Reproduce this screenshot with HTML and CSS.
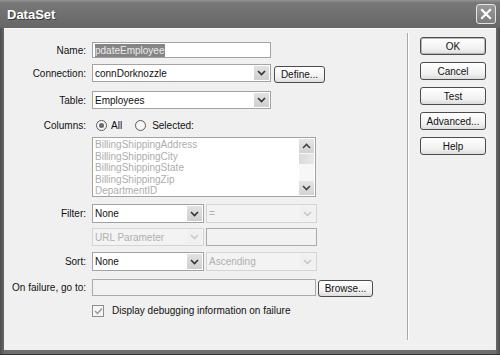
FILE: index.html
```html
<!DOCTYPE html>
<html lang="en">
<head>
    <meta charset="UTF-8">
    <title>DataSet</title>
    <link rel="stylesheet" href="styles.css">
</head>
<body>

    <div class="window">
        <!-- Title bar -->
        <div class="titlebar">
            <span class="title">DataSet</span>
            <span class="close">
                <svg width="12" height="12" viewBox="0 0 12 12"><path d="M2 2 L10 10 M10 2 L2 10" stroke="#fff" stroke-width="2.2" stroke-linecap="square"/></svg>
            </span>
        </div>

        <div class="client">
            <div class="form">

                <div class="row row-name">
                    <label class="lbl">Name:</label>
                    <div class="field w-full"><span class="sel-text">pdateEmployee</span></div>
                </div>

                <div class="row row-conn">
                    <label class="lbl">Connection:</label>
                    <div class="select w-full">
                        <span class="val">connDorknozzle</span>
                        <span class="arrow"><svg width="9" height="6" viewBox="0 0 9 6"><path d="M1 1 L4.5 4.5 L8 1" fill="none" stroke="#333" stroke-width="1.6"/></svg></span>
                    </div>
                    <button class="btn btn-define">Define...</button>
                </div>

                <div class="row row-table">
                    <label class="lbl">Table:</label>
                    <div class="select w-full">
                        <span class="val">Employees</span>
                        <span class="arrow"><svg width="9" height="6" viewBox="0 0 9 6"><path d="M1 1 L4.5 4.5 L8 1" fill="none" stroke="#333" stroke-width="1.6"/></svg></span>
                    </div>
                </div>

                <div class="row row-cols">
                    <label class="lbl">Columns:</label>
                    <span class="radio checked"></span><span class="opt">All</span>
                    <span class="radio"></span><span class="opt">Selected:</span>
                </div>

                <div class="row row-list">
                    <span class="lbl"></span>
                    <div class="listbox">
                        <ul class="items">
                            <li>BillingShippingAddress</li>
                            <li>BillingShippingCity</li>
                            <li>BillingShippingState</li>
                            <li>BillingShippingZip</li>
                            <li>DepartmentID</li>
                        </ul>
                        <div class="scrollbar">
                            <span class="sb-btn"><svg width="9" height="6" viewBox="0 0 9 6"><path d="M1 5 L4.5 1.5 L8 5" fill="none" stroke="#444" stroke-width="1.6"/></svg></span>
                            <span class="sb-thumb"></span>
                            <span class="sb-track"></span>
                            <span class="sb-btn"><svg width="9" height="6" viewBox="0 0 9 6"><path d="M1 1 L4.5 4.5 L8 1" fill="none" stroke="#444" stroke-width="1.6"/></svg></span>
                        </div>
                    </div>
                </div>

                <div class="row row-filter">
                    <label class="lbl">Filter:</label>
                    <div class="select w-half">
                        <span class="val">None</span>
                        <span class="arrow"><svg width="9" height="6" viewBox="0 0 9 6"><path d="M1 1 L4.5 4.5 L8 1" fill="none" stroke="#333" stroke-width="1.6"/></svg></span>
                    </div>
                    <div class="select off w-half2">
                        <span class="val">=</span>
                        <span class="arrow"><svg width="9" height="6" viewBox="0 0 9 6"><path d="M1 1 L4.5 4.5 L8 1" fill="none" stroke="#c4c4c4" stroke-width="1.4"/></svg></span>
                    </div>
                </div>

                <div class="row row-param">
                    <span class="lbl"></span>
                    <div class="select off w-half">
                        <span class="val">URL Parameter</span>
                        <span class="arrow"><svg width="9" height="6" viewBox="0 0 9 6"><path d="M1 1 L4.5 4.5 L8 1" fill="none" stroke="#c4c4c4" stroke-width="1.4"/></svg></span>
                    </div>
                    <div class="field off w-half2"></div>
                </div>

                <div class="row row-sort">
                    <label class="lbl">Sort:</label>
                    <div class="select w-half">
                        <span class="val">None</span>
                        <span class="arrow"><svg width="9" height="6" viewBox="0 0 9 6"><path d="M1 1 L4.5 4.5 L8 1" fill="none" stroke="#333" stroke-width="1.6"/></svg></span>
                    </div>
                    <div class="select off w-half2">
                        <span class="val">Ascending</span>
                        <span class="arrow"><svg width="9" height="6" viewBox="0 0 9 6"><path d="M1 1 L4.5 4.5 L8 1" fill="none" stroke="#c4c4c4" stroke-width="1.4"/></svg></span>
                    </div>
                </div>

                <div class="row row-fail">
                    <label class="lbl">On failure, go to:</label>
                    <div class="field off w-wide"></div>
                    <button class="btn btn-browse">Browse...</button>
                </div>

                <div class="row row-check">
                    <span class="lbl"></span>
                    <span class="checkbox"><svg width="9" height="8" viewBox="0 0 9 8"><path d="M1 4 L3.5 6.5 L8 1.5" fill="none" stroke="#999" stroke-width="1.5"/></svg></span>
                    <span class="check-text">Display debugging information on failure</span>
                </div>

            </div>

            <div class="divider"></div>

            <!-- Dialog buttons -->
            <div class="actions">
                <button class="btn btn-side btn-default">OK</button>
                <button class="btn btn-side">Cancel</button>
                <button class="btn btn-side">Test</button>
                <button class="btn btn-side">Advanced...</button>
                <button class="btn btn-side">Help</button>
            </div>
        </div>
    </div>

</body>
</html>
```

FILE: styles.css
```css
body {
    margin: 0;
    padding: 0;
    font-family: 'Liberation Sans', Arial, sans-serif;
    font-size: 10px;
    color: #111;
    background-color: #fff;
}
.window {
    width: 500px;
    height: 355px;
    box-sizing: border-box;
    padding: 0 4px 4px 4px;
    background: linear-gradient(90deg, #4e4e4e, #6e6e6e 1%, #6e6e6e 99%, #4e4e4e);
    border-bottom: 1px solid #333;
    display: flex;
    flex-direction: column;
}
.titlebar {
    height: 28px;
    margin: 0 -4px;
    padding: 0 4px 0 7px;
    display: flex;
    align-items: center;
    justify-content: space-between;
    background: linear-gradient(#949494, #787878 10%, #6e6e6e 60%, #666 100%);
}
.title {
    color: #fff;
    font-weight: bold;
    font-size: 13px;
    text-shadow: 1px 1px 0 #3a3a3a;
}
.close {
    width: 18px;
    height: 18px;
    border: 1px solid #e4e4e4;
    border-radius: 3px;
    background: linear-gradient(#9a9a9a, #7c7c7c);
    display: flex;
    align-items: center;
    justify-content: center;
}
.client {
    flex: 1;
    display: flex;
    background-color: #f0f0f0;
    border-top: 1px solid #fafafa;
}
.form {
    width: 403px;
    flex: 0 0 403px;
}
.row {
    display: flex;
    align-items: center;
    height: 18px;
}
.lbl {
    width: 82px;
    flex: 0 0 82px;
    margin-right: 6px;
    text-align: right;
}
.row-name { margin-top: 13px; height: 16px; }
.row-conn { margin-top: 6px; }
.row-table { margin-top: 9px; }
.row-cols { margin-top: 9px; height: 14px; }
.row-list { margin-top: 5px; height: 60px; align-items: stretch; }
.row-filter { margin-top: 7px; height: 19px; }
.row-param { margin-top: 5px; }
.row-sort { margin-top: 6px; height: 19px; }
.row-fail { margin-top: 8px; height: 17px; }
.row-check { margin-top: 8px; height: 13px; }

.w-full { width: 179px; }
.w-half { width: 112px; }
.w-half2 { width: 111px; margin-left: 2px; }
.w-wide { width: 224px; }

.field {
    height: 100%;
    box-sizing: border-box;
    border: 1px solid #a3a3a3;
    background-color: #fff;
    display: flex;
    align-items: center;
    padding-left: 2px;
}
.field.off {
    background-color: #f2f2f2;
    border-color: #a9a9a9;
}
.sel-text {
    background-color: #858585;
    color: #ececec;
    padding: 1px 0;
}
.select {
    height: 100%;
    box-sizing: border-box;
    border: 1px solid #a3a3a3;
    background-color: #fff;
    display: flex;
    align-items: stretch;
}
.select .val {
    flex: 1;
    padding-left: 2px;
    display: flex;
    align-items: center;
}
.select .arrow {
    width: 15px;
    margin: 1px;
    background: linear-gradient(#e2e2e2, #cfcfcf);
    display: flex;
    align-items: center;
    justify-content: center;
}
.select.off {
    background-color: #f3f3f3;
    border-color: #d4d4d4;
    color: #b0b0b0;
}
.select.off .arrow {
    background: #f0f0f0;
}

.btn {
    font-family: 'Liberation Sans', Arial, sans-serif;
    font-size: 10px;
    color: #111;
    height: 17px;
    box-sizing: border-box;
    border: 1px solid #4c4c4c;
    border-radius: 3px;
    background: linear-gradient(#ffffff, #f0f0f0 70%, #dcdcdc);
    padding: 0;
    cursor: pointer;
}
.btn-define {
    width: 51px;
    margin-left: 3px;
    margin-top: 2px;
}
.btn-browse {
    width: 55px;
    margin-left: 2px;
    margin-top: 1px;
}

.radio {
    width: 11px;
    height: 11px;
    box-sizing: border-box;
    border: 1px solid #5a5a5a;
    border-radius: 50%;
    background-color: #f6f6f6;
    display: inline-flex;
    align-items: center;
    justify-content: center;
    margin-left: 4px;
}
.radio.checked::after {
    content: "";
    width: 5px;
    height: 5px;
    border-radius: 50%;
    background-color: #6a6a6a;
}
.opt {
    margin-left: 4px;
    margin-right: 9px;
}
.opt:last-child { margin-left: 6px; }

.listbox {
    width: 224px;
    box-sizing: border-box;
    border: 1px solid #a3a3a3;
    background-color: #fff;
    display: flex;
}
.items {
    flex: 1;
    list-style: none;
    margin: 0;
    padding: 1px 0 0 2px;
    color: #adadad;
    line-height: 11.6px;
}
.scrollbar {
    width: 15px;
    margin: 1px 1px 1px 0;
    display: flex;
    flex-direction: column;
    background-color: #f7f7f7;
}
.sb-btn {
    height: 14px;
    background: linear-gradient(#e6e6e6, #d2d2d2);
    display: flex;
    align-items: center;
    justify-content: center;
}
.sb-thumb {
    height: 10px;
    margin-top: 1px;
    background: linear-gradient(90deg, #dadada, #e8e8e8);
}
.sb-track { flex: 1; }

.checkbox {
    width: 12px;
    height: 12px;
    box-sizing: border-box;
    border: 1px solid #8e8e8e;
    background-color: #f6f6f6;
    display: flex;
    align-items: center;
    justify-content: center;
}
.check-text {
    margin-left: 8px;
}

.divider {
    width: 1px;
    margin: 4px 0 10px 0;
    background-color: #a8a8a8;
    border-right: 1px solid #fff;
}
.actions {
    padding: 8px 0 0 11px;
    display: flex;
    flex-direction: column;
    gap: 7px;
}
.btn-side {
    width: 66px;
    height: 18px;
}
.btn-default {
    box-shadow: inset 0 0 0 1px #b8b8b8;
}
```
